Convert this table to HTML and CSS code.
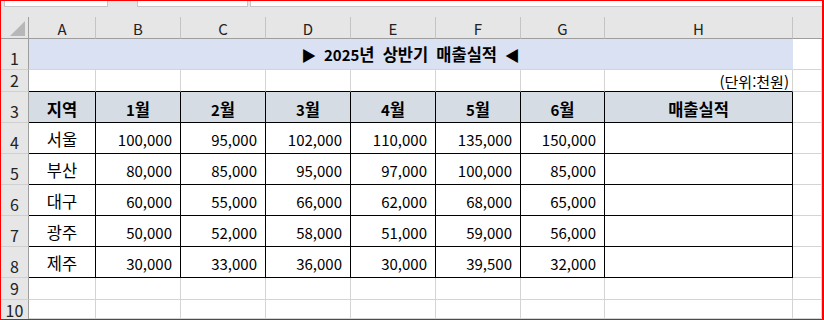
FILE: index.html
```html
<!DOCTYPE html>
<html lang="ko">
<head>
<meta charset="utf-8">
<link rel="stylesheet" href="styles.css">
</head>
<body>
<div class="frame">
  <div class="topbar">
    <div class="box box1"></div>
    <div class="box box2"></div>
    <div class="box box3"></div>
  </div>
  <div class="sheet">
    <div class="corner"><svg width="16" height="16" viewBox="0 0 16 16"><polygon points="15,0 15,15 0,15" fill="#b7b7b7"/></svg></div>
    <div class="ch">A</div><div class="ch">B</div><div class="ch">C</div><div class="ch">D</div><div class="ch">E</div><div class="ch">F</div><div class="ch">G</div><div class="ch">H</div><div class="ch last"></div>

    <div class="rh">1</div>
    <div class="c title"><span class="ttl">▶ 2025<span class="k">년 상반기 매출실적</span> ◀</span></div>
    <div class="c"></div>

    <div class="rh">2</div>
    <div class="c tt"></div><div class="c tt"></div><div class="c tt"></div><div class="c tt"></div><div class="c tt"></div><div class="c tt"></div><div class="c tt"></div><div class="c tt unit">(단위:천원)</div>
    <div class="c"></div>

    <div class="rh">3</div>
    <div class="c t hd"><span><span class="k">지역</span></span></div><div class="c t hd"><span>1<span class="k">월</span></span></div><div class="c t hd"><span>2<span class="k">월</span></span></div><div class="c t hd"><span>3<span class="k">월</span></span></div><div class="c t hd"><span>4<span class="k">월</span></span></div><div class="c t hd"><span>5<span class="k">월</span></span></div><div class="c t hd"><span>6<span class="k">월</span></span></div><div class="c t hd"><span><span class="k">매출실적</span></span></div>
    <div class="c"></div>

    <div class="rh">4</div>
    <div class="c t nm">서울</div><div class="c t n">100,000</div><div class="c t n">95,000</div><div class="c t n">102,000</div><div class="c t n">110,000</div><div class="c t n">135,000</div><div class="c t n">150,000</div><div class="c t"></div>
    <div class="c"></div>

    <div class="rh">5</div>
    <div class="c t nm">부산</div><div class="c t n">80,000</div><div class="c t n">85,000</div><div class="c t n">95,000</div><div class="c t n">97,000</div><div class="c t n">100,000</div><div class="c t n">85,000</div><div class="c t"></div>
    <div class="c"></div>

    <div class="rh">6</div>
    <div class="c t nm">대구</div><div class="c t n">60,000</div><div class="c t n">55,000</div><div class="c t n">66,000</div><div class="c t n">62,000</div><div class="c t n">68,000</div><div class="c t n">65,000</div><div class="c t"></div>
    <div class="c"></div>

    <div class="rh">7</div>
    <div class="c t nm">광주</div><div class="c t n">50,000</div><div class="c t n">52,000</div><div class="c t n">58,000</div><div class="c t n">51,000</div><div class="c t n">59,000</div><div class="c t n">56,000</div><div class="c t"></div>
    <div class="c"></div>

    <div class="rh">8</div>
    <div class="c t nm">제주</div><div class="c t n">30,000</div><div class="c t n">33,000</div><div class="c t n">36,000</div><div class="c t n">30,000</div><div class="c t n">39,500</div><div class="c t n">32,000</div><div class="c t"></div>
    <div class="c"></div>

    <div class="rh">9</div>
    <div class="c"></div><div class="c"></div><div class="c"></div><div class="c"></div><div class="c"></div><div class="c"></div><div class="c"></div><div class="c"></div><div class="c"></div>

    <div class="rh rh-last">10</div>
    <div class="c"></div><div class="c"></div><div class="c"></div><div class="c"></div><div class="c"></div><div class="c"></div><div class="c"></div><div class="c"></div><div class="c"></div>
  </div>
</div>
</body>
</html>
```
FILE: styles.css
```css
* { box-sizing: border-box; }
html, body { margin: 0; padding: 0; background: #fff; }
body { font-family: "Noto Sans CJK KR", "Noto Sans", sans-serif; color: #000; }

.frame {
  width: 824px;
  height: 320px;
  border: 1px solid #ff0000;
  border-right-width: 2px;
  overflow: hidden;
  background: #fff;
}

.topbar {
  height: 16px;
  background: #e6e6e6;
  position: relative;
}
.box {
  position: absolute;
  top: 0;
  height: 6px;
  background: #fff;
  border: 1px solid #c6c6c6;
  border-top: none;
}
.box1 { left: 3px; width: 104px; }
.box2 { left: 136px; width: 111px; }
.box3 { left: 249px; right: -2px; }

.sheet {
  display: grid;
  grid-template-columns: 28px 67px 85px 85px 85px 85px 85px 84px 188px 1fr;
  grid-template-rows: 22px 31px 22px repeat(6, 31px) 22px 19px;
}

.corner {
  background: #e6e6e6;
  border-right: 1px solid #9e9e9e;
  border-bottom: 1px solid #9e9e9e;
  display: flex;
  align-items: flex-start;
  justify-content: flex-end;
  padding: 4px 2px 0 0;
}
.corner svg { display: block; }

.ch {
  background: #e6e6e6;
  border-right: 1px solid #c4c4c4;
  border-bottom: 1px solid #9e9e9e;
  display: flex;
  align-items: center;
  justify-content: center;
  font-size: 15px;
  line-height: 1;
  color: #222;
  padding-top: 1px;
}
.ch.last { border-right: none; }

.rh {
  background: #e6e6e6;
  border-right: 1px solid #9e9e9e;
  border-bottom: 1px solid #d0d0d0;
  display: flex;
  align-items: flex-end;
  justify-content: center;
  font-size: 16px;
  line-height: 1;
  color: #222;
  padding-bottom: 3px;
}
.rh-last { border-bottom: none; padding-bottom: 1px; }

.c {
  border-right: 1px solid #d4d4d4;
  border-bottom: 1px solid #d4d4d4;
  display: flex;
  align-items: center;
  font-size: 15px;
  line-height: 1;
  white-space: nowrap;
  min-width: 0;
}
.k { font-size: 16.5px; }

.title {
  grid-column: span 8;
  background: #d9e1f2;
  justify-content: center;
  padding-top: 1px;
  font-weight: bold;
  border-right-color: #d9e1f2;
}
.ttl { word-spacing: 3.5px; }

.tt { border-bottom-color: #000; }
.unit { justify-content: flex-end; padding-right: 3px; padding-top: 2px; }

.t {
  border-right-color: #000;
  border-bottom-color: #000;
}
.hd {
  background: #d6dce4;
  font-weight: bold;
  justify-content: center;
  padding-top: 4px;
}
.nm { justify-content: center; padding-top: 2px; font-size: 16.5px; }
.n { justify-content: flex-end; padding-right: 8px; padding-top: 2px; }
```
